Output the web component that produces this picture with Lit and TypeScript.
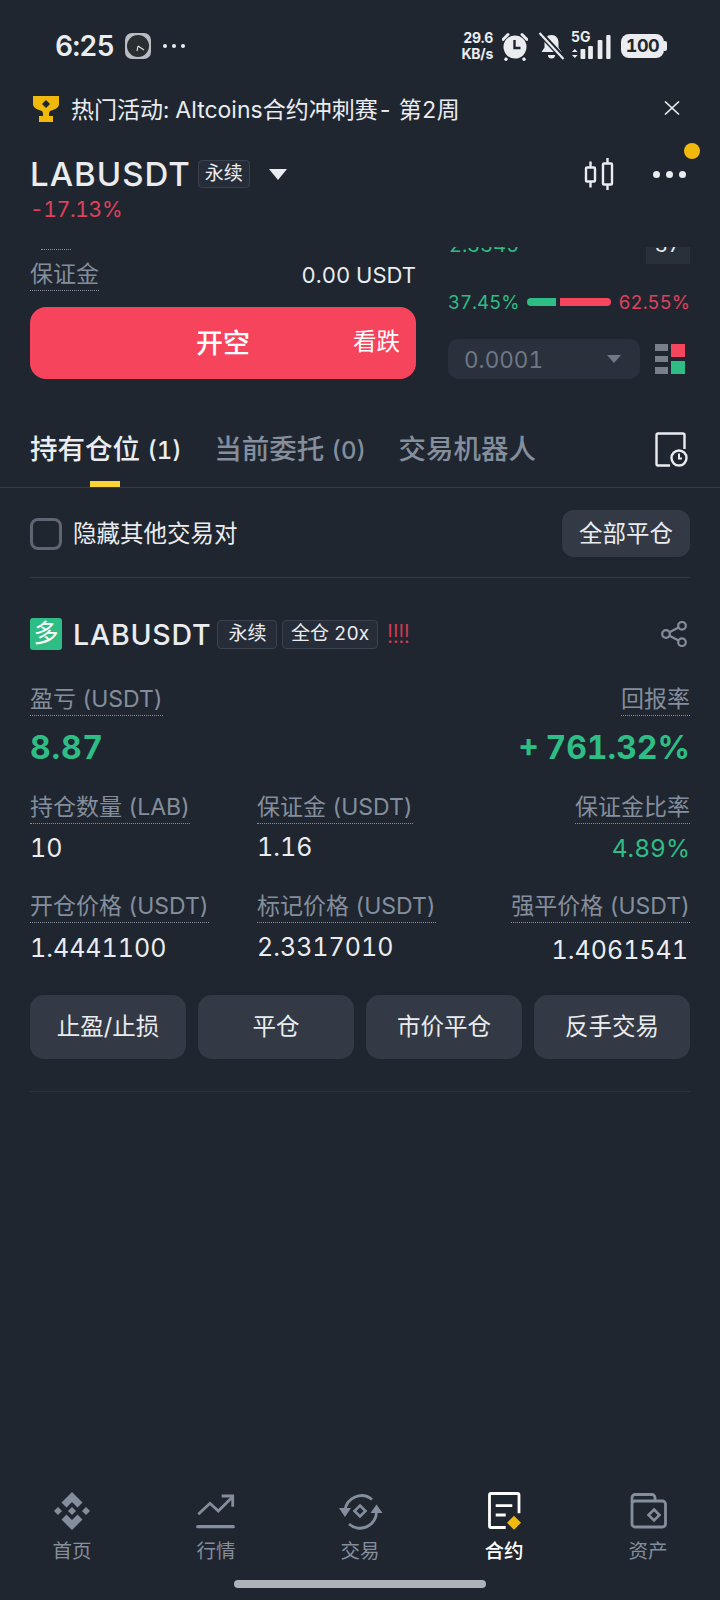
import { LitElement, css, html, svg } from "lit";
import { customElement } from "lit/decorators.js";

const watchIcon = html`<svg class="watch" width="26" height="26" viewBox="0 0 26 26">
  <rect width="26" height="26" rx="7" fill="#b9bdc2" />
  <circle cx="13" cy="13" r="11" fill="#2a2d31" />
  <path d="M13 13l-1 5M13 13l6 4" stroke="#e6e8ea" stroke-width="1.100" fill="none" />
</svg>`;

const alarmIcon = html`<svg width="26" height="29" viewBox="0 0 26 29">
  <path d="M1 7.500 6 2.500M25 7.500 20 2.500" stroke="#eaecef" stroke-width="3" stroke-linecap="round" />
  <circle cx="13" cy="15" r="11.500" fill="#eaecef" />
  <path d="M5 26l-2 2.500M21 26l2 2.500" stroke="#eaecef" stroke-width="3" />
  <path d="M12.500 8v8h6" stroke="#1f2630" stroke-width="2.400" fill="none" />
</svg>`;

const bellOffIcon = html`<svg class="bell" width="27" height="28" viewBox="0 0 27 28">
  <path d="M13.500 3c4.500 0 7 3.400 7 7.500v5l3 4.500H3.500l3-4.500v-5c0-4.100 2.500-7.500 7-7.500z" fill="#eaecef" />
  <path d="M10 23h7a3.500 3.500 0 0 1-7 0z" fill="#eaecef" />
  <path d="M1 0 26 27" stroke="#1f2630" stroke-width="5.500" />
  <path d="M1.500 1 25.500 27" stroke="#eaecef" stroke-width="2.200" />
</svg>`;

const signalIcon = html`<svg width="40" height="26" viewBox="0 0 42 26" preserveAspectRatio="none">
  <path d="M1 18l3-3 3 3zM1 21l3 3 3-3z" fill="#eaecef" />
  <rect x="10" y="15" width="5" height="10" rx="1" fill="#eaecef" />
  <rect x="18" y="12" width="5" height="13" rx="1" fill="#eaecef" />
  <rect x="28" y="6" width="5" height="19" rx="1" fill="#eaecef" />
  <rect x="37" y="1" width="4.500" height="24" rx="1" fill="#eaecef" />
</svg>`;

const trophyIcon = html`<svg width="26" height="27" viewBox="0 0 26 27">
  <path d="M0 1h26v8c0 3-3 5-6 6l-3 1-1 2v3h4v6H6v-6h4v-3l-1-2-3-1C3 14 0 12 0 9z" fill="#f0b90b" />
  <path d="M13 5l4 4-4 4-4-4z" fill="#1f2630" />
</svg>`;

const closeIcon = html`<svg width="16" height="14" viewBox="0 0 16 14">
  <path d="M1 0.500 15 13.500M15 0.500 1 13.500" stroke="#eaecef" stroke-width="1.600" />
</svg>`;

const candleIcon = html`<svg width="30" height="32" viewBox="0 0 30 32" fill="none" stroke="#eaecef" stroke-width="2.400">
  <rect x="2" y="9.500" width="9" height="14" rx="1" />
  <path d="M6.500 3.500v6M6.500 23.500v6" />
  <rect x="19" y="5.500" width="9" height="21" rx="1" />
  <path d="M23.500 0v5.500M23.500 26.500V32" />
</svg>`;

const depthIcon = html`<svg width="30" height="30" viewBox="0 0 30 30">
  <rect y="0" width="13" height="7" fill="#79808b" />
  <rect y="12" width="13" height="6" fill="#79808b" />
  <rect y="23" width="13" height="7" fill="#79808b" />
  <rect x="16" width="14" height="13" fill="#f6465d" />
  <rect x="16" y="17" width="14" height="13" fill="#2ebd85" />
</svg>`;

const historyIcon = html`<svg width="33" height="35" viewBox="0 0 33 35" fill="none" stroke="#eaecef" stroke-width="2.400">
  <path d="M15 33.500H3a1.500 1.500 0 0 1-1.500-1.500V3A1.500 1.500 0 0 1 3 1.500h25A1.500 1.500 0 0 1 29.500 3v14" />
  <circle cx="24" cy="26" r="7.500" />
  <path d="M24 21.500v5h3" stroke-width="2" />
</svg>`;

const shareIcon = html`<svg width="26" height="26" viewBox="0 0 26 26" fill="none" stroke="#848e9c" stroke-width="2.200">
  <circle cx="5" cy="13" r="3.800" />
  <circle cx="21" cy="4.800" r="3.800" />
  <circle cx="21" cy="21.200" r="3.800" />
  <path d="M8.400 11.300 17.600 6.500M8.400 14.700 17.600 19.500" />
</svg>`;

const navIcons = [
  svg`<path fill="#848e9c" transform="translate(0.500 1)" d="M19.500 0 30 10.500 25 15.500 19.500 10 14 15.500 9 10.500zM19.500 15l4 4-4 4-4-4zM5.500 15l4 4-4 4-4-4zM33.500 15l4 4-4 4-4-4zM19.500 38 30 27.500 25 22.500 19.500 28 14 22.500 9 27.500z" />`,
  svg`<g fill="none" stroke="#848e9c" stroke-width="2.800">
    <path d="M2.300 23.300 14 12.300l8.300 7.700L35.700 6.700" />
    <path d="M25.700 5h11v10.700" />
    <path d="M1.700 35.700h35.600" stroke-width="3.200" stroke-linecap="round" />
  </g>`,
  svg`<g fill="none" stroke="#848e9c" stroke-width="2.800">
    <path d="M5 20A16.500 16.500 0 0 1 32 8.500" />
    <path d="M36.500 20A16.500 16.500 0 0 1 9 33" />
    <path d="M20 14.500l5.500 5.500-5.500 5.500-5.500-5.500z" stroke-width="2.600" />
  </g>
  <path fill="#848e9c" d="M-1 17h12l-6 9zM30.500 22l6-8.500 6 8.500z" />`,
  svg`<g fill="none" stroke="#fff" stroke-width="2.800">
    <path d="M21.700 36.500H7a1.500 1.500 0 0 1-1.500-1.500V4A1.500 1.500 0 0 1 7 2.500h26.500A1.500 1.500 0 0 1 35 4v18.300" />
    <path d="M11.700 14.700h16.600M11.700 24h10" />
  </g>
  <path fill="#f0b90b" d="M30 24.700l7 7-7 7-7-7z" />`,
  svg`<g fill="none" stroke="#848e9c" stroke-width="2.800">
    <path d="M4 12V6.500a3 3 0 0 1 3-3h17a3 3 0 0 1 3 3v4" />
    <rect x="4" y="10" width="33.500" height="26" rx="3" />
    <path d="M26 18.500l5.500 5.500-5.500 5.500-5.500-5.500z" stroke-width="2.600" />
  </g>`,
];

@customElement("app-root")
export class AppRoot extends LitElement {
  static styles = css`
    :host {
      display: block;
      width: 720px;
      height: 1600px;
      font-family: "Inter", "Noto Sans CJK SC", sans-serif;
      font-variant-numeric: tabular-nums;
      color: #eaecef;
    }
    .page {
      height: 1600px;
      display: flex;
      flex-direction: column;
      background: #1f2630;
      overflow: hidden;
    }

    .status {
      height: 84px;
      flex: none;
      box-sizing: border-box;
      display: flex;
      align-items: center;
      padding: 8px 53px 0 55px;
      gap: 12px;
    }
    .time {
      font-size: 28px;
      font-weight: 600;
      width: 58px;
      letter-spacing: -0.700px;
      white-space: nowrap;
    }
    .more-status {
      display: flex;
      gap: 5px;
    }
    .more-status i {
      width: 4px;
      height: 4px;
      border-radius: 50%;
      background: #eaecef;
    }
    .status-right {
      margin-left: auto;
      display: flex;
      align-items: center;
      gap: 9px;
    }
    .speed {
      font-size: 14px;
      font-weight: 700;
      line-height: 16px;
      text-align: right;
      letter-spacing: -0.300px;
    }
    .bell {
      margin-left: 1px;
    }
    .net {
      position: relative;
      width: 40px;
      height: 26px;
      margin-left: -3px;
    }
    .net svg {
      position: relative;
      top: 1px;
    }
    .net span {
      position: absolute;
      top: -3px;
      left: 0;
      font-size: 14px;
      font-weight: 700;
      line-height: 14px;
    }
    .battery {
      display: flex;
      align-items: center;
      margin-left: 1px;
    }
    .battery b {
      width: 43px;
      height: 24px;
      border-radius: 8px;
      background: #eaecef;
      color: #1f2630;
      font-size: 18px;
      line-height: 24px;
      text-align: center;
      letter-spacing: -0.500px;
    }
    .battery i {
      width: 3px;
      height: 10px;
      background: #eaecef;
      border-radius: 0 2px 2px 0;
    }

    .notice {
      height: 48px;
      flex: none;
      display: flex;
      align-items: center;
      padding: 0 40px 0 33px;
      font-size: 23px;
    }
    .notice span {
      margin-left: 12px;
      flex: 1;
    }

    .header {
      height: 115px;
      flex: none;
      box-sizing: border-box;
      padding: 20px 30px 0 30px;
    }
    .title {
      height: 44px;
      display: flex;
      align-items: center;
    }
    .title h1 {
      margin: 0;
      font-size: 33px;
      font-weight: 500;
      letter-spacing: 1px;
    }
    .perp {
      margin-left: 7px;
      width: 52px;
      height: 28px;
      box-sizing: border-box;
      border: 1px solid #3a424e;
      border-radius: 4px;
      background: #262d38;
      font-size: 19px;
      line-height: 25px;
      text-align: center;
    }
    .caret {
      margin-left: 19px;
      width: 0;
      height: 0;
      border-left: 9px solid transparent;
      border-right: 9px solid transparent;
      border-top: 11px solid #eaecef;
    }
    .title-actions {
      margin-left: auto;
      display: flex;
      align-items: center;
      gap: 39px;
      margin-right: 4px;
    }
    .dots {
      position: relative;
      display: flex;
      gap: 6px;
    }
    .dots i {
      width: 7px;
      height: 7px;
      border-radius: 50%;
      background: #eaecef;
    }
    .dots em {
      position: absolute;
      top: -28px;
      right: -14px;
      width: 16px;
      height: 16px;
      border-radius: 50%;
      background: #f0b90b;
    }
    .pct {
      margin-top: 2px;
      font-size: 21px;
      line-height: 24px;
      color: #e0405a;
      letter-spacing: -0.300px;
    }

    .panel {
      height: 132px;
      flex: none;
      display: flex;
      gap: 32px;
      padding: 0 30px;
      overflow: hidden;
    }
    .panel-left {
      width: 386px;
      flex: none;
    }
    .cut {
      width: 30px;
      margin-left: 11px;
      height: 2px;
      border-bottom: 1px dotted #848e9c;
    }
    .margin-row {
      margin-top: 10px;
      display: flex;
      justify-content: space-between;
      align-items: flex-start;
    }
    .dotted {
      display: inline-block;
      color: #848e9c;
      font-size: 23px;
      line-height: 28px;
      padding-bottom: 2px;
      border-bottom: 1px dotted #848e9c;
      white-space: nowrap;
    }
    .margin-row b {
      font-weight: 400;
      font-size: 22px;
      line-height: 30px;
    }
    .sell {
      margin-top: 16px;
      height: 72px;
      box-sizing: border-box;
      padding-bottom: 4px;
      border-radius: 16px;
      background: #f6445c;
      position: relative;
      display: flex;
      align-items: center;
      justify-content: center;
      color: #fff;
      font-size: 27px;
      font-weight: 500;
    }
    .sell small {
      position: absolute;
      right: 16px;
      top: 20px;
      font-size: 23.500px;
      font-weight: 400;
      line-height: 30px;
    }
    .panel-right {
      flex: 1;
    }
    .clip {
      height: 17px;
      display: flex;
      justify-content: space-between;
      overflow: hidden;
      font-size: 20px;
      line-height: 24px;
    }
    .clip span {
      margin-top: -14px;
      margin-left: 1px;
      color: #2ebd85;
    }
    .clip b {
      font-weight: 400;
      width: 44px;
      background: #28313a;
      text-align: center;
      line-height: 24px;
    }
    .clip b em {
      display: block;
      margin-top: -14px;
      font-style: normal;
    }
    .ratio {
      margin-top: 28px;
      height: 20px;
      display: flex;
      align-items: center;
      justify-content: space-between;
      font-size: 18.600px;
      color: #2ebd85;
    }
    .ratio .neg {
      color: #e0405a;
    }
    .bar {
      display: flex;
      gap: 4px;
      width: 84px;
      height: 8px;
    }
    .bar i {
      border-radius: 4px 0 0 4px;
      background: #2ebd85;
      width: 29px;
    }
    .bar i + i {
      border-radius: 0 4px 4px 0;
      background: #f6465d;
      flex: 1;
    }
    .depth {
      margin-top: 27px;
      display: flex;
      align-items: center;
      justify-content: space-between;
    }
    .select {
      width: 192px;
      height: 40px;
      box-sizing: border-box;
      padding: 0 19px 0 16px;
      border-radius: 10px;
      background: #2a313c;
      display: flex;
      align-items: center;
      justify-content: space-between;
      color: #6f7885;
      font-size: 22.500px;
    }
    .select i {
      width: 0;
      height: 0;
      border-left: 7px solid transparent;
      border-right: 7px solid transparent;
      border-top: 8px solid #6f7885;
    }
    .depth svg {
      margin-right: 5px;
    }

    .tabs {
      height: 58px;
      flex: none;
      padding: 50px 30px 0;
      display: flex;
      border-bottom: 1px solid #333b45;
      font-size: 27.500px;
      line-height: 38px;
      color: #848e9c;
      font-weight: 500;
    }
    .tab {
      position: relative;
      margin-right: 32.500px;
      padding-top: 1px;
      white-space: nowrap;
    }
    .tab small {
      font-size: 24px;
    }
    .tab.on {
      color: #eaecef;
    }
    .tab.on::after {
      content: "";
      position: absolute;
      left: 60px;
      bottom: 0;
      width: 30px;
      height: 6px;
      background: #fcd535;
    }
    .tabs svg {
      margin-left: auto;
      margin-top: 3px;
      margin-right: 2px;
    }

    .filter {
      margin: 0 30px;
      padding: 22px 0 20px;
      display: flex;
      align-items: center;
      border-bottom: 1px solid #333b45;
      font-size: 23.500px;
    }
    .check {
      width: 32px;
      height: 32px;
      box-sizing: border-box;
      border: 3px solid #5e6673;
      border-radius: 8px;
      margin-right: 11px;
    }
    .filter span {
      padding-bottom: 3px;
    }
    .close-all {
      margin-left: auto;
      width: 128px;
      height: 47px;
      box-sizing: border-box;
      padding-bottom: 3px;
      border-radius: 12px;
      background: #333a45;
      display: flex;
      align-items: center;
      justify-content: center;
    }

    .card {
      margin: 0 30px;
      padding: 40px 0 32px;
      border-bottom: 1px solid #2b323d;
    }
    .card-title {
      height: 32px;
      display: flex;
      align-items: center;
    }
    .long {
      width: 32px;
      height: 32px;
      border-radius: 3px;
      background: #2ebd85;
      color: #fff;
      font-size: 25px;
      line-height: 30px;
      text-align: center;
    }
    .card-title h2 {
      margin: 0 6px 0 11px;
      font-size: 28.500px;
      font-weight: 500;
      letter-spacing: 0.800px;
    }
    .tag {
      height: 29px;
      box-sizing: border-box;
      padding: 0 10px;
      margin-right: 5px;
      border: 1px solid #3a424e;
      border-radius: 4px;
      background: #262d38;
      font-size: 19px;
      line-height: 26px;
      white-space: nowrap;
    }
    .tag.wide {
      padding: 0 7.500px;
    }
    .warn {
      margin-left: 4px;
      color: #d63a52;
      font-size: 25px;
      font-weight: 300;
      letter-spacing: -1.500px;
    }
    .card-title svg {
      margin-left: auto;
      margin-right: 3px;
    }
    .top-row {
      margin-top: 35px;
      display: flex;
      justify-content: space-between;
    }
    .big {
      margin-top: 12px;
      display: flex;
      justify-content: space-between;
      font-size: 32px;
      font-weight: 700;
      line-height: 40px;
      color: #2ebd85;
      word-spacing: -2px;
    }
    .big span:first-child {
      letter-spacing: 0.800px;
    }
    .grid {
      margin-top: 25px;
      display: grid;
      grid-template-columns: 227px 1fr auto;
      row-gap: 26px;
    }
    .cell {
      display: flex;
      flex-direction: column;
      align-items: flex-start;
    }
    .cell.end {
      align-items: flex-end;
    }
    .cell strong {
      margin-top: 7px;
      font-weight: 400;
      font-size: 25px;
      line-height: 36px;
    }
    .first strong {
      margin-top: 6px;
    }
    .cell strong.up {
      margin-top: 6px;
    }
    .first strong.up {
      margin-top: 5px;
    }
    .cell strong.down {
      margin-top: 9px;
      margin-bottom: -2px;
      padding-right: 2px;
    }
    .cell strong.buy {
      color: #2ebd85;
      font-size: 24.500px;
    }
    .actions {
      margin-top: 29px;
      display: grid;
      grid-template-columns: repeat(4, 1fr);
      gap: 12px;
    }
    .actions div {
      height: 64px;
      box-sizing: border-box;
      padding-bottom: 5px;
      border-radius: 14px;
      background: #333a45;
      display: flex;
      align-items: center;
      justify-content: center;
      font-size: 23.500px;
    }

    .nav {
      margin-top: auto;
      display: grid;
      grid-template-columns: repeat(5, 1fr);
    }
    .nav-item {
      display: flex;
      flex-direction: column;
      align-items: center;
      gap: 8px;
      color: #848e9c;
      font-size: 19.500px;
      line-height: 24px;
    }
    .nav-item svg {
      overflow: visible;
    }
    .nav-item.on {
      color: #fff;
      font-weight: 500;
    }
    .home-bar {
      margin: 17px auto 12px;
      width: 252px;
      height: 8px;
      border-radius: 4px;
      background: #aeb3ba;
    }
  `;

  private label(text: string) {
    return html`<span class="dotted">${text}</span>`;
  }

  protected render() {
    const tabs = ["首页", "行情", "交易", "合约", "资产"];
    return html`
      <div class="page">
        <div class="status">
          <span class="time">6:25</span>
          ${watchIcon}
          <span class="more-status"><i></i><i></i><i></i></span>
          <div class="status-right">
            <div class="speed">29.6<br />KB/s</div>
            ${alarmIcon} ${bellOffIcon}
            <div class="net"><span>5G</span>${signalIcon}</div>
            <div class="battery"><b>100</b><i></i></div>
          </div>
        </div>

        <div class="notice">
          ${trophyIcon}
          <span>热门活动: Altcoins合约冲刺赛- 第2周</span>
          ${closeIcon}
        </div>

        <div class="header">
          <div class="title">
            <h1>LABUSDT</h1>
            <div class="perp">永续</div>
            <div class="caret"></div>
            <div class="title-actions">
              ${candleIcon}
              <div class="dots"><i></i><i></i><i></i><em></em></div>
            </div>
          </div>
          <div class="pct">-17.13%</div>
        </div>

        <div class="panel">
          <div class="panel-left">
            <div class="cut"></div>
            <div class="margin-row">
              ${this.label("保证金")}
              <b>0.00 USDT</b>
            </div>
            <div class="sell">开空<small>看跌</small></div>
          </div>
          <div class="panel-right">
            <div class="clip">
              <span>2.3345</span>
              <b><em>37</em></b>
            </div>
            <div class="ratio">
              <span>37.45%</span>
              <div class="bar"><i></i><i></i></div>
              <span class="neg">62.55%</span>
            </div>
            <div class="depth">
              <div class="select">0.0001<i></i></div>
              ${depthIcon}
            </div>
          </div>
        </div>

        <div class="tabs">
          <div class="tab on">持有仓位 <small>(1)</small></div>
          <div class="tab">当前委托 <small>(0)</small></div>
          <div class="tab">交易机器人</div>
          ${historyIcon}
        </div>

        <div class="filter">
          <div class="check"></div>
          <span>隐藏其他交易对</span>
          <div class="close-all">全部平仓</div>
        </div>

        <div class="card">
          <div class="card-title">
            <div class="long">多</div>
            <h2>LABUSDT</h2>
            <div class="tag">永续</div>
            <div class="tag wide">全仓 20x</div>
            <div class="warn">!!!!</div>
            ${shareIcon}
          </div>
          <div class="top-row">
            ${this.label("盈亏 (USDT)")} ${this.label("回报率")}
          </div>
          <div class="big"><span>8.87</span><span>+ 761.32%</span></div>
          <div class="grid">
            <div class="cell first">${this.label("持仓数量 (LAB)")}<strong>10</strong></div>
            <div class="cell first">${this.label("保证金 (USDT)")}<strong class="up">1.16</strong></div>
            <div class="cell first end">${this.label("保证金比率")}<strong class="buy">4.89%</strong></div>
            <div class="cell">${this.label("开仓价格 (USDT)")}<strong>1.4441100</strong></div>
            <div class="cell">${this.label("标记价格 (USDT)")}<strong class="up">2.3317010</strong></div>
            <div class="cell end">${this.label("强平价格 (USDT)")}<strong class="down">1.4061541</strong></div>
          </div>
          <div class="actions">
            <div>止盈/止损</div>
            <div>平仓</div>
            <div>市价平仓</div>
            <div>反手交易</div>
          </div>
        </div>

        <div class="nav">
          ${tabs.map(
            (t, i) => html`<div class="nav-item ${i === 3 ? "on" : ""}">
              <svg width="40" height="40" viewBox="0 0 40 40">${navIcons[i]}</svg>
              ${t}
            </div>`,
          )}
        </div>
        <div class="home-bar"></div>
      </div>
    `;
  }
}
